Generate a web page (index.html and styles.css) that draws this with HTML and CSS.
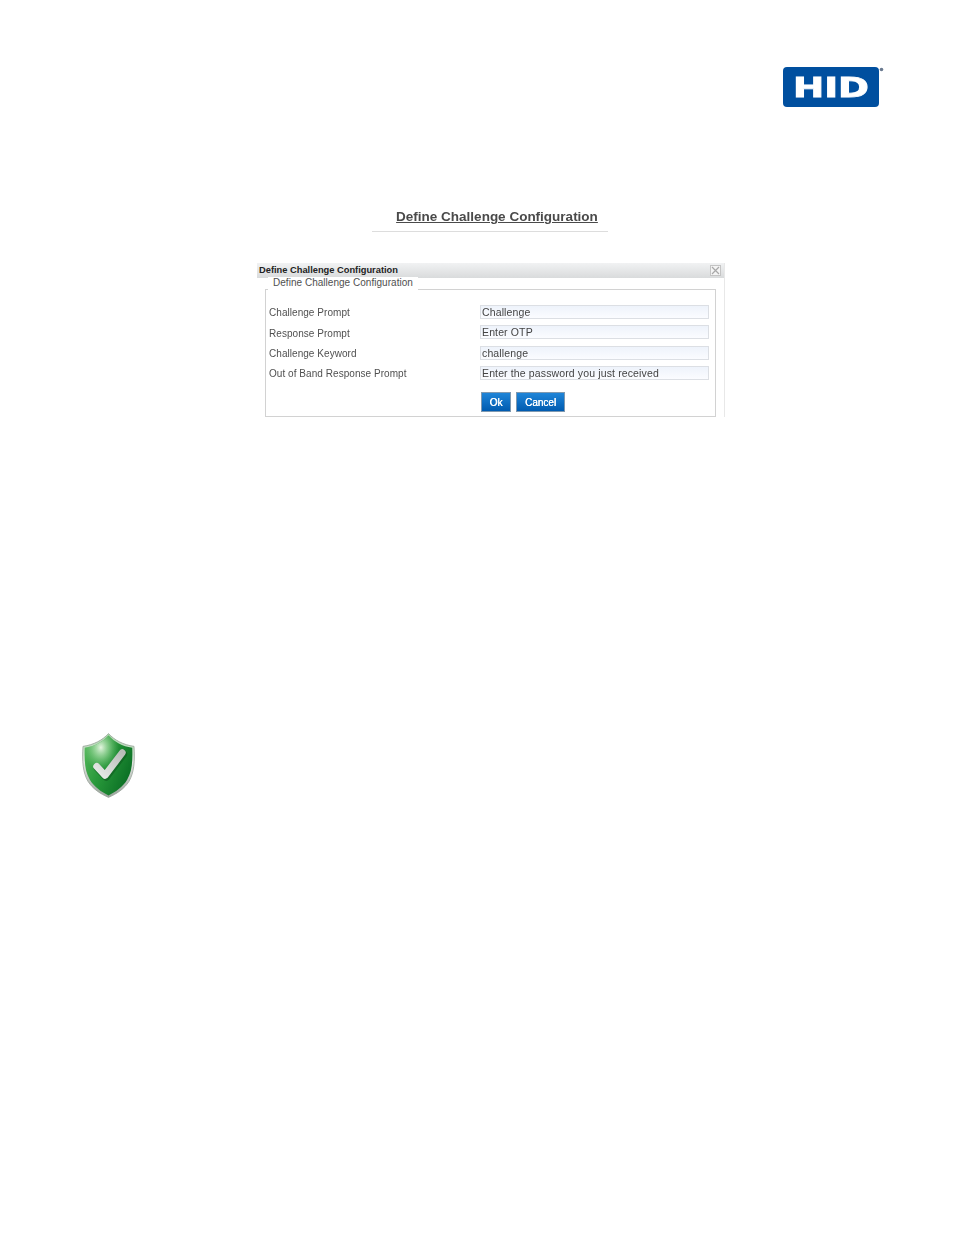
FILE: index.html
```html
<!DOCTYPE html>
<html lang="en">
<head>
<meta charset="utf-8">
<title>Define Challenge Configuration</title>
<link rel="stylesheet" href="styles.css">
</head>
<body>
<div class="page">
  <header class="top">
    <svg class="logo" width="102" height="40" viewBox="0 0 102 40" role="img" aria-label="HID">
      <rect x="0" y="0" width="96" height="40" rx="4" fill="#004f9f"/>
      <text class="logo-text" x="10" y="30" textLength="76" lengthAdjust="spacingAndGlyphs">HID</text>
      <circle cx="98.500" cy="2.500" r="1.800" fill="#6a7a90"/>
    </svg>
  </header>

  <section class="caption">
    <h2 class="caption-title">Define Challenge Configuration</h2>
    <div class="caption-rule"></div>
  </section>

  <section class="dialog">
    <div class="titlebar">
      <span class="title">Define Challenge Configuration</span>
      <svg class="close" width="11" height="11" viewBox="0 0 11 11">
        <rect x="0.500" y="0.500" width="10" height="10" fill="#f4f4f4" stroke="#c4c4c4"/>
        <path d="M2 2L9 9M9 2L2 9" stroke="#a8a8a8" stroke-width="1.200"/>
      </svg>
    </div>
    <div class="panel">
      <div class="legend">Define Challenge Configuration</div>
      <div class="fields">
        <label class="lbl">Challenge Prompt</label><div class="input">Challenge</div>
        <label class="lbl">Response Prompt</label><div class="input">Enter OTP</div>
        <label class="lbl">Challenge Keyword</label><div class="input">challenge</div>
        <label class="lbl">Out of Band Response Prompt</label><div class="input">Enter the password you just received</div>
      </div>
      <div class="actions">
        <button class="btn btn-ok" type="button">Ok</button>
        <button class="btn btn-cancel" type="button">Cancel</button>
      </div>
    </div>
  </section>

  <section class="note">
    <svg class="shield" width="53" height="65" viewBox="0 0 54 66">
      <defs>
        <linearGradient id="rim" x1="0" y1="0" x2="0" y2="1">
          <stop offset="0" stop-color="#a8d4a8"/>
          <stop offset="0.450" stop-color="#dfe5df"/>
          <stop offset="1" stop-color="#9aa39b"/>
        </linearGradient>
        <linearGradient id="body" x1="0" y1="0" x2="1" y2="0.500">
          <stop offset="0" stop-color="#58bb5e"/>
          <stop offset="0.500" stop-color="#28983a"/>
          <stop offset="1" stop-color="#0d7226"/>
        </linearGradient>
        <radialGradient id="gloss" cx="0.340" cy="0.200" r="0.380">
          <stop offset="0" stop-color="#e4f5e0" stop-opacity="1"/>
          <stop offset="0.450" stop-color="#a2dba2" stop-opacity="0.650"/>
          <stop offset="1" stop-color="#6fc274" stop-opacity="0"/>
        </radialGradient>
        <linearGradient id="tick" x1="0" y1="1" x2="1" y2="0">
          <stop offset="0" stop-color="#e8ebe8"/>
          <stop offset="1" stop-color="#b9bdb9"/>
        </linearGradient>
      </defs>
      <path d="M27 0.500C21 7 12 12 1 13.500C0 29 1 40 6 49C11 57 19 62 27 65.500C35 62 43 57 48 49C53 40 54 29 53 13.500C42 12 33 7 27 0.500Z" fill="url(#rim)" stroke="#9aa59b" stroke-width="0.800"/>
      <path d="M27 2.500C21 9 13 13.500 2.800 15C2.300 29 3 39 8 47.500C12.500 55 20 60 27 63.500C34 60 41.500 55 46 47.500C51 39 51.700 29 51.200 15C41 13.500 33 9 27 2.500Z" fill="url(#body)"/>
      <path d="M27 2.500C21 9 13 13.500 2.800 15C2.300 29 3 39 8 47.500C12.500 55 20 60 27 63.500C34 60 41.500 55 46 47.500C51 39 51.700 29 51.200 15C41 13.500 33 9 27 2.500Z" fill="url(#gloss)"/>
      <path d="M15 34L23.500 43L41 20" fill="none" stroke="#0a521a" stroke-opacity="0.500" stroke-width="8" stroke-linecap="round" stroke-linejoin="round" transform="translate(1 1.500)"/>
      <path d="M15 34L23.500 43L41 20" fill="none" stroke="url(#tick)" stroke-width="7" stroke-linecap="round" stroke-linejoin="round"/>
    </svg>
  </section>
</div>
</body>
</html>
```

FILE: styles.css
```css
html, body {
  margin: 0;
  padding: 0;
  background: #ffffff;
}

.page {
  width: 954px;
  height: 1235px;
  overflow: hidden;
  font-family: "Liberation Sans", Arial, sans-serif;
  color: #3c3c3c;
}

.top {
  display: flex;
  justify-content: flex-end;
  padding: 67px 69px 0 0;
}

.logo {
  display: block;
  filter: blur(0.4px);
}

.logo-text {
  font-family: "DejaVu Sans", sans-serif;
  font-weight: 700;
  font-size: 26px;
  fill: #ffffff;
  stroke: #ffffff;
  stroke-width: 0.800px;
}

.caption {
  display: flex;
  flex-direction: column;
  align-items: center;
  width: 236px;
  margin: 102px 0 0 372px;
  filter: blur(0.3px);
}

.caption-title {
  margin: 0;
  font-size: 13.500px;
  line-height: 16px;
  font-weight: 700;
  color: #4a4a4a;
  text-decoration: underline;
  white-space: nowrap;
  padding-left: 14px;
}

.caption-rule {
  width: 100%;
  height: 1px;
  margin-top: 6px;
  background: #dddddd;
}

.dialog {
  width: 467px;
  height: 154px;
  margin: 31px 0 0 257px;
  border-right: 1px solid #e8e8e8;
  box-sizing: content-box;
  filter: blur(0.3px);
}

.titlebar {
  display: flex;
  align-items: center;
  justify-content: space-between;
  height: 15px;
  padding: 0 3px 0 2px;
  background: linear-gradient(#f1f2f3, #d9dbdc);
}

.title {
  position: relative;
  top: -1px;
  font-size: 9.300px;
  font-weight: 700;
  color: #222222;
  white-space: nowrap;
}

.close {
  display: block;
}

.panel {
  position: relative;
  width: 449px;
  height: 126px;
  margin: 11px 0 0 8px;
  border: 1px solid #d2d2d2;
}

.legend {
  position: absolute;
  left: 2px;
  top: -13px;
  padding: 0 5px 1px;
  background: #ffffff;
  font-size: 10px;
  line-height: 12px;
  color: #505050;
  white-space: nowrap;
  letter-spacing: 0.030px;
}

.fields {
  display: grid;
  grid-template-columns: 211px 229px;
  grid-auto-rows: 14px;
  row-gap: 6.400px;
  align-items: center;
  padding: 15px 0 0 3px;
}

.lbl {
  padding-top: 2.400px;
  font-size: 10px;
  line-height: 14px;
  color: #505050;
  white-space: nowrap;
  letter-spacing: 0.050px;
}

.input {
  box-sizing: border-box;
  height: 14px;
  padding-left: 1px;
  border: 1px solid #dcdfe4;
  background: linear-gradient(#eef3fb, #fbfcff);
  font-size: 10.500px;
  line-height: 12px;
  color: #444444;
  white-space: nowrap;
  letter-spacing: 0.130px;
}

.actions {
  display: flex;
  gap: 5px;
  margin: 12px 0 0 215px;
}

.btn {
  box-sizing: border-box;
  height: 20px;
  padding: 0;
  border: 1px solid #7f99b0;
  background: linear-gradient(#1f85d8, #005bb0);
  color: #ffffff;
  font-family: "Liberation Sans", Arial, sans-serif;
  font-size: 10px;
  font-weight: 400;
  text-shadow: 0.3px 0 0 #ffffff;
}

.btn-ok {
  width: 30px;
}

.btn-cancel {
  width: 49px;
}

.note {
  margin: 316px 0 0 82px;
}

.shield {
  display: block;
  filter: blur(0.4px);
}
```
